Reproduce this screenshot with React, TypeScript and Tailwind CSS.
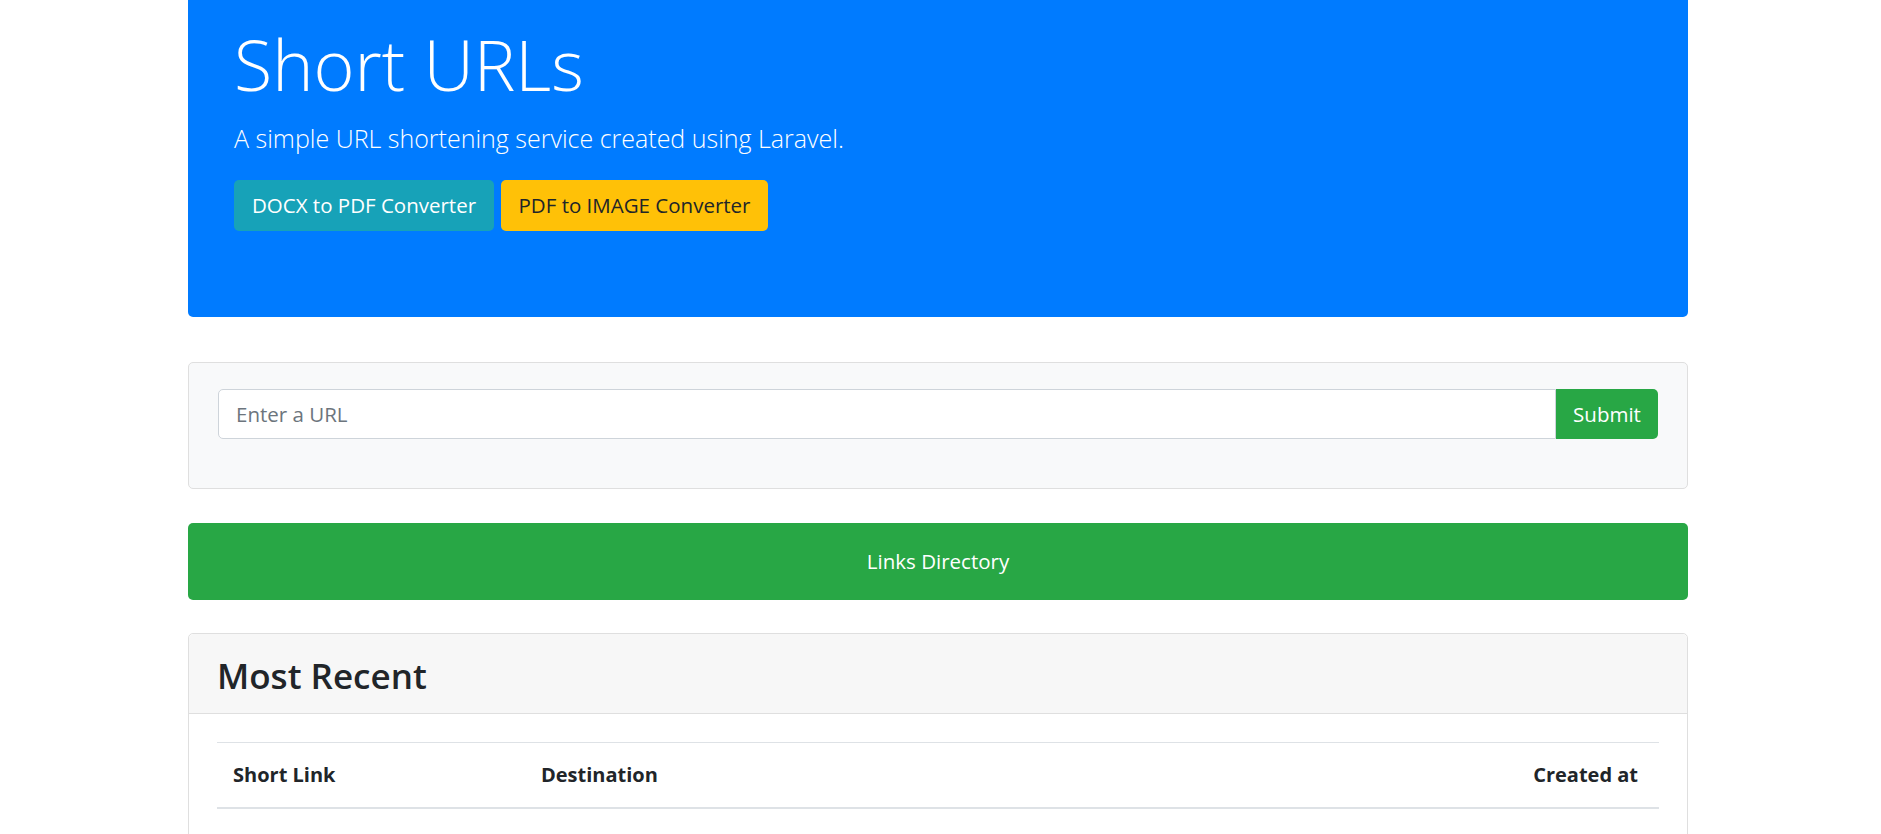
import React from 'react';

const columns = [
  { label: 'Short Link', className: 'w-[308px] text-left pl-[16px]' },
  { label: 'Destination', className: 'text-left pl-[16px]' },
  { label: 'Created at', className: 'text-right pr-[21px]' },
];

export default function App() {
  return (
    <div className="min-h-screen bg-white font-['Open_Sans',sans-serif] text-[#212529]">
      <div className="ml-[188px] w-[1500px] pb-[60px]">
        {/* Jumbotron */}
        <div className="rounded-b-[5px] bg-[#007bff] px-[46px] pt-[20px] pb-[86px] text-white">
          <h1 className="mb-[11px] text-[70px] font-light leading-[88px]">Short URLs</h1>
          <p className="mb-[22px] text-[25px] font-light leading-[39px]">
            A simple URL shortening service created using Laravel.
          </p>
          <div className="flex gap-[7px]">
            <a className="flex h-[51px] w-[260px] items-center justify-center rounded-[5px] bg-[#17a2b8] text-[20.5px] text-white">
              DOCX to PDF Converter
            </a>
            <a className="flex h-[51px] w-[267px] items-center justify-center rounded-[5px] bg-[#ffc107] text-[20.5px] text-[#212529]">
              PDF to IMAGE Converter
            </a>
          </div>
        </div>

        {/* URL form */}
        <div className="mt-[45px] rounded-[5px] border border-[#dfdfdf] bg-[#f8f9fa] px-[29px] pt-[26px] pb-[28px]">
          <form className="mb-[21px] flex">
            <input
              type="text"
              placeholder="Enter a URL"
              className="h-[50px] flex-1 rounded-l-[5px] border border-[#ced4da] bg-white px-[17px] text-[20.5px] text-[#495057] placeholder:text-[#6c757d] outline-none"
            />
            <button
              type="button"
              className="h-[50px] w-[102px] rounded-r-[5px] bg-[#28a745] text-[20.5px] text-white"
            >
              Submit
            </button>
          </form>
        </div>

        {/* Links directory */}
        <a className="mt-[34px] flex h-[77px] items-center justify-center rounded-[5px] bg-[#28a745] text-[20.5px] text-white">
          Links Directory
        </a>

        {/* Most recent */}
        <div className="mt-[33px] rounded-[5px] border border-[#dfdfdf]">
          <div className="rounded-t-[5px] border-b border-[#dfdfdf] bg-[#f7f7f7] px-[28px] pt-[19px] pb-[15px]">
            <h3 className="text-[35px] font-semibold leading-[45px]">Most Recent</h3>
          </div>
          <div className="p-[28px]">
            <table className="w-full border-collapse">
              <thead>
                <tr className="border-t border-b-2 border-t-[#dee2e6] border-b-[#dee2e6]">
                  {columns.map((col) => (
                    <th
                      key={col.label}
                      className={`h-[65px] text-[20px] font-bold ${col.className}`}
                    >
                      {col.label}
                    </th>
                  ))}
                </tr>
              </thead>
              <tbody>
                <tr>
                  <td className="h-[64px]" colSpan={3}></td>
                </tr>
              </tbody>
            </table>
          </div>
        </div>
      </div>
    </div>
  );
}
